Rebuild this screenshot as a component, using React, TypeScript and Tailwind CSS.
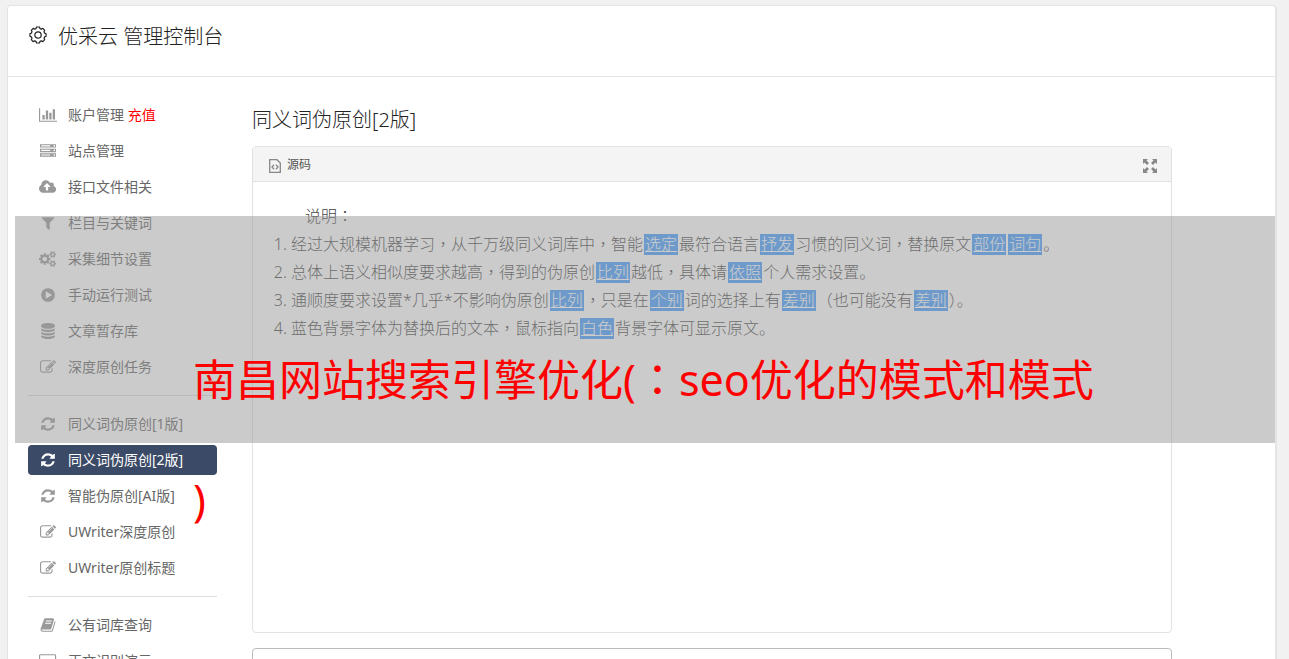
import { ReactNode } from "react";

const icons = {
  chart: {
    box: "0 0 2048 1792",
    d: "M640 896v512h-256v-512h256zm384-512v1024h-256v-1024h256zm1024 1152v128h-2048v-1536h128v1408h1920zm-640-896v768h-256v-768h256zm384-384v1152h-256v-1152h256z",
  },
  server: {
    box: "0 0 1792 1792",
    d: "M128 1408h1024v-128h-1024v128zm0-512h1024v-128h-1024v128zm1568 448q0-40-28-68t-68-28-68 28-28 68 28 68 68 28 68-28 28-68zm-1568-960h1024v-128h-1024v128zm1568 448q0-40-28-68t-68-28-68 28-28 68 28 68 68 28 68-28 28-68zm0-512q0-40-28-68t-68-28-68 28-28 68 28 68 68 28 68-28 28-68zm96 832v384h-1792v-384h1792zm0-512v384h-1792v-384h1792zm0-512v384h-1792v-384h1792z",
  },
  cloud: {
    box: "0 0 1920 1792",
    d: "M1280 864q0-14-9-23l-352-352q-9-9-23-9t-23 9l-351 351q-10 12-10 24 0 14 9 23t23 9h224v352q0 13 9.5 22.5t22.5 9.5h192q13 0 22.5-9.5t9.5-22.5v-352h224q13 0 22.5-9.5t9.5-22.5zm640 288q0 159-112.5 271.5t-271.5 112.5h-1088q-185 0-316.5-131.5t-131.5-316.5q0-130 70-240t188-165q-2-30-2-43 0-212 150-362t362-150q156 0 285.5 87t188.5 231q71-62 166-62 106 0 181 75t75 181q0 76-41 138 130 31 213.5 135.5t83.5 238.5z",
  },
  filter: {
    box: "0 0 1792 1792",
    d: "M1595 295q17 41-14 70l-493 493v742q0 42-39 59-13 5-25 5-27 0-45-19l-256-256q-19-19-19-45v-486l-493-493q-31-29-14-70 17-39 59-39h1280q42 0 59 39z",
  },
  cogs: {
    box: "0 0 1920 1792",
    d: "M896 896q0-106-75-181t-181-75-181 75-75 181 75 181 181 75 181-75 75-181zm768 512q0-52-38-90t-90-38-90 38-38 90q0 53 37.5 90.5t90.5 37.5 90.5-37.5 37.5-90.5zm0-1024q0-52-38-90t-90-38-90 38-38 90q0 53 37.5 90.5t90.5 37.5 90.5-37.5 37.5-90.5zm-384 421v185q0 10-7 19.5t-16 10.5l-155 24q-11 35-32 76 34 48 90 115 7 11 7 20 0 12-7 19-23 30-82.5 89.5t-78.5 59.5q-11 0-21-7l-115-90q-37 19-77 31-11 108-23 155-7 24-30 24h-186q-11 0-20-7.5t-10-17.5l-23-153q-34-10-75-31l-118 89q-7 7-20 7-11 0-21-8-144-133-144-160 0-9 7-19 10-14 41-53t47-61q-23-44-35-82l-152-24q-10-1-17-9.5t-7-19.5v-185q0-10 7-19.5t16-10.5l155-24q11-35 32-76-34-48-90-115-7-11-7-20 0-12 7-20 22-30 82-89t79-59q11 0 21 7l115 90q34-18 77-32 11-108 23-154 7-24 30-24h186q11 0 20 7.5t10 17.5l23 153q34 10 75 31l118-89q8-7 20-7 11 0 21 8 144 133 144 160 0 9-7 19-12 16-42 54t-45 60q23 48 34 82l152 23q10 2 17 10.5t7 19.5zm640 533v140q0 16-149 31-12 27-30 52 51 113 51 138 0 4-4 7-122 71-124 71-8 0-46-47t-52-68q-20 2-30 2t-30-2q-14 21-52 68t-46 47q-2 0-124-71-4-3-4-7 0-25 51-138-18-25-30-52-149-15-149-31v-140q0-16 149-31 13-29 30-52-51-113-51-138 0-4 4-7 4-2 35-20t59-34 30-16q8 0 46 46.5t52 67.5q20-2 30-2t30 2q51-71 92-112l6-2q4 0 124 70 4 3 4 7 0 25-51 138 17 23 30 52 149 15 149 31zm0-1024v140q0 16-149 31-12 27-30 52 51 113 51 138 0 4-4 7-122 71-124 71-8 0-46-47t-52-68q-20 2-30 2t-30-2q-14 21-52 68t-46 47q-2 0-124-71-4-3-4-7 0-25 51-138-18-25-30-52-149-15-149-31v-140q0-16 149-31 13-29 30-52-51-113-51-138 0-4 4-7 4-2 35-20t59-34 30-16q8 0 46 46.5t52 67.5q20-2 30-2t30 2q51-71 92-112l6-2q4 0 124 70 4 3 4 7 0 25-51 138 17 23 30 52 149 15 149 31z",
  },
  play: {
    box: "0 0 1792 1792",
    d: "M896 128q209 0 385.5 103t279.5 279.5 103 385.5-103 385.5-279.5 279.5-385.5 103-385.5-103-279.5-279.5-103-385.5 103-385.5 279.5-279.5 385.5-103zm384 823q32-18 32-55t-32-55l-544-320q-31-19-64-1-32 19-32 56v640q0 37 32 56 16 8 32 8 17 0 32-9z",
  },
  database: {
    box: "0 0 1792 1792",
    d: "M896 768q237 0 443-43t325-127v170q0 69-103 128t-280 93.5-385 34.5-385-34.5-280-93.5-103-128v-170q119 84 325 127t443 43zm0 768q237 0 443-43t325-127v170q0 69-103 128t-280 93.5-385 34.5-385-34.5-280-93.5-103-128v-170q119 84 325 127t443 43zm0-384q237 0 443-43t325-127v170q0 69-103 128t-280 93.5-385 34.5-385-34.5-280-93.5-103-128v-170q119 84 325 127t443 43zm0-1152q208 0 385 34.5t280 93.5 103 128v128q0 69-103 128t-280 93.5-385 34.5-385-34.5-280-93.5-103-128v-128q0-69 103-128t280-93.5 385-34.5z",
  },
  edit: {
    box: "0 0 1792 1792",
    d: "M888 1184l116-116-152-152-116 116v56h96v96h56zm440-720q-16-16-33 1l-350 350q-17 17-1 33t33-1l350-350q17-17 1-33zm80 594v190q0 119-84.5 203.5t-203.5 84.5h-832q-119 0-203.5-84.5t-84.5-203.5v-832q0-119 84.5-203.5t203.5-84.5h832q63 0 117 25 15 7 18 23 3 17-9 29l-49 49q-14 14-32 8-23-6-45-6h-832q-66 0-113 47t-47 113v832q0 66 47 113t113 47h832q66 0 113-47t47-113v-126q0-13 9-22l64-64q15-15 35-7t20 29zm-96-738l288 288-672 672h-288v-288zm444 132l-92 92-288-288 92-92q28-28 68-28t68 28l152 152q28 28 28 68t-28 68z",
  },
  refresh: {
    box: "0 0 1792 1792",
    d: "M1639 1056q0 5-1 7-64 268-268 434.5t-478 166.5q-146 0-282.5-55t-243.5-157l-129 129q-19 19-45 19t-45-19-19-45v-448q0-26 19-45t45-19h448q26 0 45 19t19 45-19 45l-137 137q71 66 161 102t187 36q134 0 250-65t186-179q11-17 53-117 8-23 30-23h192q13 0 22.5 9.5t9.5 22.5zm25-800v448q0 26-19 45t-45 19h-448q-26 0-45-19t-19-45 19-45l138-138q-148-137-349-137-134 0-250 65t-186 179q-11 17-53 117-8 23-30 23h-199q-13 0-22.5-9.5t-9.5-22.5v-7q65-268 270-434.5t480-166.5q146 0 284 55.5t245 156.5l130-129q19-19 45-19t45 19 19 45z",
  },
  book: {
    box: "0 0 1792 1792",
    d: "M1703 478q40 57 18 129l-275 906q-19 64-76.5 107.5t-122.5 43.5h-923q-77 0-148.5-53.5t-99.5-131.5q-24-67-2-127 0-4 3-27t4-37q1-8-3-21.5t-3-19.5q2-11 8-21t16.5-23.5 16.5-23.5q23-38 45-91.5t30-91.5q3-10 .5-30t-.5-28q3-11 17-28t17-23q21-36 42-92t25-90q1-9-2.5-32t.5-28q4-13 22-30.5t22-22.5q19-26 42.5-84.5t27.5-96.5q1-8-3-25.5t-2-26.5q2-8 9-18t18-23 17-21q8-12 16.5-30.5t15-35 16-36 19.5-32 26.5-23.5 36-11.5 47.5 5.5l-1 3q38-9 51-9h761q74 0 114 56t18 130l-274 906q-36 119-71.5 153.5t-128.5 34.5h-869q-27 0-38 15-11 16-1 43 24 70 144 70h923q29 0 56-15.5t35-41.5l300-987q7-22 5-57 38 15 59 43zm-1064 2q-4 13 2 22.5t20 9.5h608q13 0 25.5-9.5t16.5-22.5l21-64q4-13-2-22.5t-20-9.5h-608q-13 0-25.5 9.5t-16.5 22.5zm-83 256q-4 13 2 22.5t20 9.5h608q13 0 25.5-9.5t16.5-22.5l21-64q4-13-2-22.5t-20-9.5h-608q-13 0-25.5 9.5t-16.5 22.5z",
  },
  desktop: {
    box: "0 0 1920 1792",
    d: "M160 128h1600q66 0 113 47t47 113v1088q0 66-47 113t-113 47h-544v128h128v64h-768v-64h128v-128h-544q-66 0-113-47t-47-113v-1088q0-66 47-113t113-47zm0 128q-32 0-32 32v832q0 32 32 32h1600q32 0 32-32v-832q0-32-32-32z",
  },
};

type IconName = keyof typeof icons;

type Item = {
  icon: IconName;
  label: string;
  extra?: string;
  active?: boolean;
};

const groups: Item[][] = [
  [
    { icon: "chart", label: "账户管理", extra: "充值" },
    { icon: "server", label: "站点管理" },
    { icon: "cloud", label: "接口文件相关" },
    { icon: "filter", label: "栏目与关键词" },
    { icon: "cogs", label: "采集细节设置" },
    { icon: "play", label: "手动运行测试" },
    { icon: "database", label: "文章暂存库" },
    { icon: "edit", label: "深度原创任务" },
  ],
  [
    { icon: "refresh", label: "同义词伪原创[1版]" },
    { icon: "refresh", label: "同义词伪原创[2版]", active: true },
    { icon: "refresh", label: "智能伪原创[AI版]" },
    { icon: "edit", label: "UWriter深度原创" },
    { icon: "edit", label: "UWriter原创标题" },
  ],
  [
    { icon: "book", label: "公有词库查询" },
    { icon: "desktop", label: "正文识别演示" },
  ],
];

function Icon({ name }: { name: IconName }) {
  return (
    <svg className="h-4 w-auto" viewBox={icons[name].box} fill="currentColor">
      <path d={icons[name].d} />
    </svg>
  );
}

function Word({ children }: { children: ReactNode }) {
  return (
    <span className="mx-px inline-block h-[21px] bg-[#439dfd] px-px leading-5 text-white underline">
      {children}
    </span>
  );
}

// punctuation that sits in the middle of its cell
function Mid({ children }: { children: ReactNode }) {
  return (
    <span lang="zh-TW" className="font-['Noto_Sans_CJK_TC',sans-serif] leading-none">
      {children}
    </span>
  );
}

function Sidebar() {
  return (
    <nav className="w-[189px] shrink-0 font-normal">
      {groups.map((group, i) => (
        <ul
          key={i}
          className={
            i > 0
              ? "mt-[13px] flex flex-col gap-1.5 border-t border-[#ddd] pt-[13px]"
              : "flex flex-col gap-1.5"
          }
        >
          {group.map((item) => (
            <li key={item.label}>
              <a
                href="#"
                className={
                  item.active
                    ? "flex h-[30px] items-center gap-2.5 rounded bg-[#3b4a66] px-2.5 text-white"
                    : "flex h-[30px] items-center gap-2.5 rounded px-2.5 text-[#666]"
                }
              >
                <span
                  className={
                    item.active
                      ? "flex w-5 justify-center"
                      : "flex w-5 justify-center text-[#999]"
                  }
                >
                  <Icon name={item.icon} />
                </span>
                <span className="whitespace-nowrap">
                  {item.label}
                  {item.extra && (
                    <span className="text-[#f00]"> {item.extra}</span>
                  )}
                </span>
              </a>
            </li>
          ))}
        </ul>
      ))}
    </nav>
  );
}

function Editor() {
  return (
    <section className="h-[487px] rounded border border-[#e2e2e2]">
      <div className="flex h-[35px] items-center justify-between border-b border-[#e2e2e2] bg-[#f4f4f4] pr-3.5 pl-4">
        <button className="flex items-center gap-1.5 pt-0.5 text-xs font-normal text-[#555]">
          <svg
            className="mt-0.5 h-3.5 w-3"
            viewBox="0 0 12 14"
            fill="none"
            stroke="#888"
          >
            <path d="M.7.700h7.300l3.300 3.300v9.300H.7z" strokeWidth="1.300" />
            <path d="M5 5.800l-2 2.200 2 2.200M7 5.800l2 2.200-2 2.200" strokeWidth="1.300" />
          </svg>
          源码
        </button>
        <button aria-label="全屏">
          <svg className="mt-1 h-3.5 w-3.5" viewBox="0 0 14 14" fill="#888">
            <path d="M0 0h5L3.500 1.500 6 4 4 6 1.500 3.500 0 5zM14 0v5l-1.500-1.500L10 6 8 4l2.500-2.500L9 0zM0 14V9l1.500 1.500L4 8l2 2-2.500 2.500L5 14zM14 14H9l1.500-1.500L8 10l2-2 2.500 2.500L14 9z" />
          </svg>
        </button>
      </div>
      <div className="px-5 py-5 text-base leading-7 text-[#444]">
        <p className="indent-8">
          说明<Mid>：</Mid>
        </p>
        <ol className="list-decimal pl-[18px]">
          <li>
            经过大规模机器学习<Mid>，</Mid>从千万级同义词库中<Mid>，</Mid>智能
            <Word>选定</Word>
            最符合语言<Word>抒发</Word>习惯的同义词<Mid>，</Mid>替换原文
            <Word>部份</Word>
            <Word>词句</Word>。
          </li>
          <li>
            总体上语义相似度要求越高<Mid>，</Mid>得到的伪原创
            <Word>比列</Word>
            越低<Mid>，</Mid>具体请<Word>依照</Word>个人需求设置。
          </li>
          <li>
            通顺度要求设置*几乎*不影响伪原创<Word>比列</Word>
            <Mid>，</Mid>只是在
            <Word>个别</Word>词的选择上有<Word>差别</Word>（也可能没有
            <Word>差别</Word>
            <Mid>）</Mid>。
          </li>
          <li>
            蓝色背景字体为替换后的文本<Mid>，</Mid>鼠标指向
            <Word>白色</Word>
            背景字体可显示原文。
          </li>
        </ol>
      </div>
    </section>
  );
}

export default function App() {
  return (
    <div
      lang="zh-CN"
      className="relative h-screen overflow-hidden bg-[#f1f1f1] pt-[5px] pr-3 pl-[7px] font-['Noto_Sans','Noto_Sans_CJK_SC',sans-serif] text-sm font-light"
    >
      <div className="min-h-full rounded-t border border-r-2 border-[#e4e4e4] bg-white">
        <header className="flex h-[71px] items-center gap-2.5 border-b border-[#e4e4e4] px-5 pb-2 text-[#222]">
          <svg
            className="mb-1 size-5"
            viewBox="-1 -1 20 20"
            fill="none"
            stroke="currentColor"
            strokeWidth="1.200"
            strokeLinejoin="round"
          >
            <path d="M7.500 1h3l.5 1.600 1.300.5 1.600-.7 1.800 1.900-.7 1.500.6 1.300 1.500.6v2.600l-1.500.6-.6 1.300.7 1.500-1.800 1.900-1.600-.7-1.300.5-.5 1.600h-3L7 15.400l-1.300-.5-1.600.7-1.800-1.900.7-1.500-.6-1.300L.9 10.300V7.700l1.500-.6L3 5.800l-.7-1.500 1.800-1.900 1.600.7L7 2.600z" />
            <circle cx="9" cy="9" r="3.200" />
          </svg>
          <h1 className="text-xl font-light">优采云 管理控制台</h1>
        </header>
        <div className="flex gap-[35px] pt-[23px] pl-5">
          <Sidebar />
          <main className="mr-[103px] min-w-0 flex-1">
            <h2 className="mt-[5px] mb-[11px] text-xl leading-[30px] font-light text-[#222]">
              同义词伪原创[2版]
            </h2>
            <Editor />
            <textarea
              aria-label="文本"
              className="mt-[15px] block h-40 w-full resize-none rounded border border-[#bbb]"
            />
          </main>
        </div>
      </div>
      <div className="absolute top-[216px] right-3.5 left-[15px] h-[227px] bg-[#979797]/50">
        <p className="mx-auto w-[904px] pt-[104px] text-[43px] leading-[120px] font-normal whitespace-nowrap text-[#f00]">
          南昌网站搜索引擎优化(<Mid>：</Mid>seo优化的模式和模式
          <br />)
        </p>
      </div>
    </div>
  );
}
